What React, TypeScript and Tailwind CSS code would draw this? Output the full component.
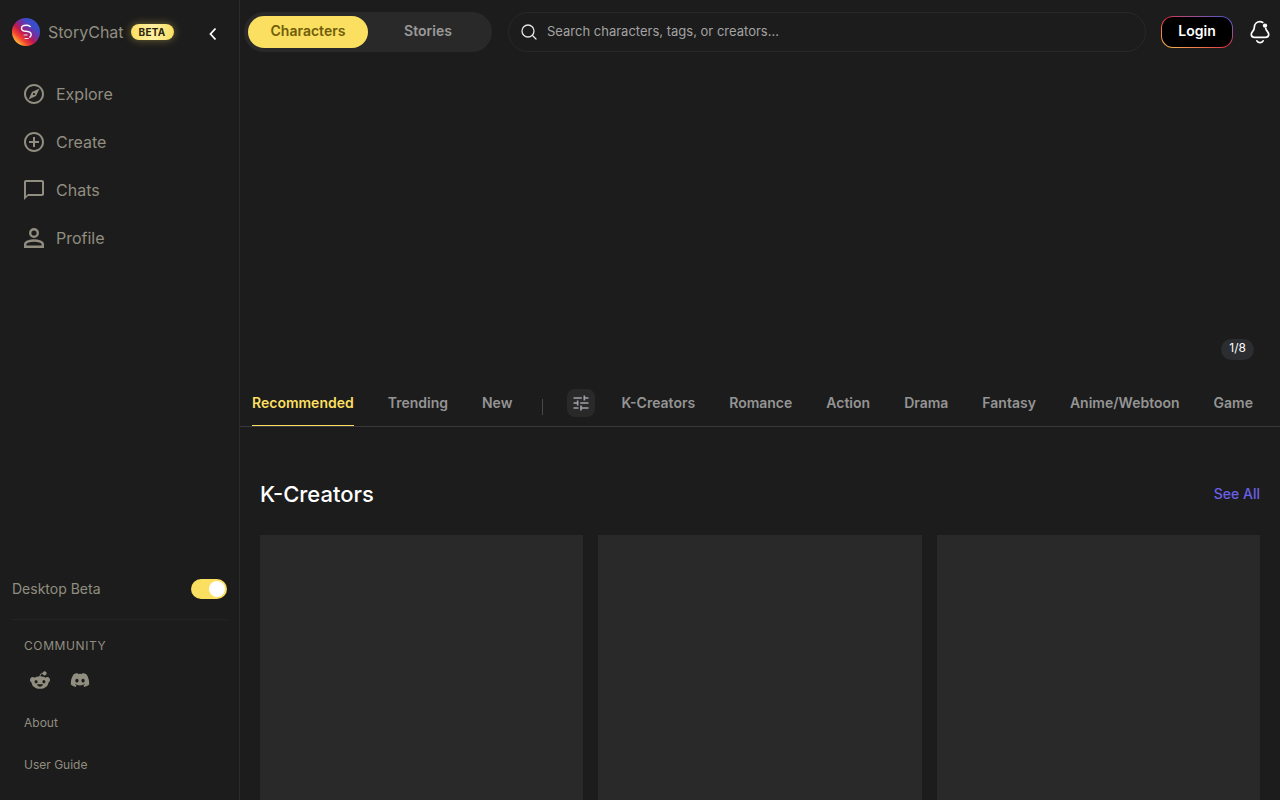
import { useState } from "react";
import { FaDiscord, FaRedditAlien } from "react-icons/fa6";
import {
  MdAddCircleOutline,
  MdChatBubbleOutline,
  MdOutlineExplore,
  MdTune,
} from "react-icons/md";

const categories = ["K-Creators", "Romance", "Action", "Drama", "Fantasy", "Anime/Webtoon", "Game"];
const feeds = ["Recommended", "Trending", "New"];

function Logo() {
  return (
    <svg viewBox="0 0 28 28" className="w-7 h-7 shrink-0" aria-hidden="true">
      <defs>
        <linearGradient id="logo" x1="0.12" y1="0.85" x2="0.8" y2="0.12">
          <stop offset="0" stopColor="#ffc13b" />
          <stop offset="0.22" stopColor="#f5452f" />
          <stop offset="0.42" stopColor="#c01a4e" />
          <stop offset="0.62" stopColor="#7b2c9c" />
          <stop offset="0.85" stopColor="#3b4cc8" />
        </linearGradient>
      </defs>
      <circle cx="14" cy="14" r="14" fill="url(#logo)" />
      <g fill="none" stroke="#fff" strokeLinecap="round">
        <path d="M18.200 8.600c-1-.9-2.300-1.300-4-1.300-2.700 0-4.700 1.200-4.700 3.100 0 2 1.800 2.600 4.500 2.900 3 .3 5.200 1 5.200 3.200 0 1.100-.5 2-1.400 2.600" strokeWidth="1.4" />
        <path d="M12 17h3.200M13 20.500h3.200" strokeWidth="0.9" />
      </g>
    </svg>
  );
}

function PersonIcon() {
  return (
    <svg viewBox="0 0 20 20" className="w-5 h-5 m-0.5" fill="none" stroke="currentColor" strokeWidth="2.4">
      <circle cx="10" cy="5" r="3.8" />
      <path d="M1.2 18.8v-2.5c0-2.5 5.3-3.8 8.8-3.8s8.8 1.3 8.8 3.8v2.5z" />
    </svg>
  );
}

function BellIcon() {
  return (
    <svg viewBox="0 0 24 24" className="w-6 h-6" fill="none" stroke="#fff" strokeWidth="1.700" strokeLinecap="round" strokeLinejoin="round">
      <path d="M14.800 2.400C14 2 13 1.700 12 1.700c-3.300 0-5.600 2.300-5.600 5.400 0 2.100-.7 3.100-1.900 4.500C3.500 12.800 3.100 13.700 3.300 14.900c.3 1.700 1.500 2.500 3.200 2.500h11c1.700 0 2.900-.8 3.200-2.500.2-1.200-.2-2.100-1.200-3.300-1-1.200-1.600-2-1.800-3.300" />
      <path d="M8.900 20.800c.6 1.100 1.700 1.900 3.100 1.900s2.500-.8 3.100-1.900" />
      <circle cx="17" cy="5.600" r="2.200" fill="#fff" stroke="none" />
    </svg>
  );
}

const navItems = [
  { label: "Explore", icon: <MdOutlineExplore className="w-6 h-6" /> },
  { label: "Create", icon: <MdAddCircleOutline className="w-6 h-6" /> },
  { label: "Chats", icon: <MdChatBubbleOutline className="w-6 h-6" /> },
  { label: "Profile", icon: <PersonIcon /> },
];

function Sidebar() {
  const [desktop, setDesktop] = useState(true);

  return (
    <aside className="w-60 shrink-0 flex flex-col border-r border-[#2b2b2b] text-[#918e80]">
      <div className="h-16 pl-3 pr-4 flex items-center">
        <Logo />
        <span className="ml-2 text-base">StoryChat</span>
        <span className="ml-[7px] h-4 px-2 flex items-center rounded-full bg-linear-to-r from-[#fadf60] via-[#fff0a0] to-[#fadf60] text-[10px] font-bold tracking-wide text-[#2b2610] shadow-[0_0_8px_rgba(250,223,96,0.4)]">
          BETA
        </span>
        <button type="button" aria-label="Collapse sidebar" className="ml-auto mt-1 w-5 h-5 flex items-center justify-center text-white">
          <svg viewBox="0 0 12 16" className="w-3 h-4" fill="none" stroke="currentColor" strokeWidth="1.8">
            <path d="M8.500 2.500 3.500 8l5 5.500" />
          </svg>
        </button>
      </div>

      <nav className="mt-1.5 px-3">
        {navItems.map((item) => (
          <a key={item.label} href="#" className="h-12 px-2.5 flex items-center gap-2.5 text-base">
            {item.icon}
            {item.label}
          </a>
        ))}
      </nav>

      <div className="mt-auto px-3 pb-3.5">
        <div className="h-10 mb-2.5 flex items-center justify-between text-sm">
          <label htmlFor="desktop-beta">Desktop Beta</label>
          <input
            id="desktop-beta"
            type="checkbox"
            role="switch"
            checked={desktop}
            onChange={(e) => setDesktop(e.target.checked)}
            className="appearance-none w-9 h-5 rounded-full bg-[#555] checked:bg-[#fadf60] before:block before:w-4 before:h-4 before:m-0.5 before:rounded-full before:bg-white checked:before:translate-x-4"
          />
        </div>
        <div className="border-t border-[#242424] px-3 pt-4">
          <h2 className="text-xs leading-5 tracking-wider">COMMUNITY</h2>
          <div className="mt-2 mb-1.5 flex gap-2">
            <a href="#" aria-label="Reddit" className="w-8 h-8 flex items-center justify-center">
              <FaRedditAlien className="w-5 h-5" />
            </a>
            <a href="#" aria-label="Discord" className="w-8 h-8 flex items-center justify-center">
              <FaDiscord className="w-5 h-5" />
            </a>
          </div>
          <a href="#" className="h-[42px] flex items-center text-xs">About</a>
          <a href="#" className="h-[42px] flex items-center text-xs">User Guide</a>
        </div>
      </div>
    </aside>
  );
}

function Header() {
  return (
    <header className="h-16 shrink-0 pl-1 pr-2 flex items-center">
      <div className="h-10 p-1 flex rounded-full bg-[#292929]">
        <button type="button" className="w-[120px] pb-0.5 rounded-full bg-[#fadf60] text-sm font-semibold text-[#6f5d0a]">
          Characters
        </button>
        <button type="button" className="w-[120px] pb-0.5 rounded-full text-sm font-semibold text-[#9a9a9a]">
          Stories
        </button>
      </div>
      <label className="ml-4 h-10 px-3 flex-1 flex items-center gap-2.5 rounded-full border border-[#292929]">
        <svg viewBox="0 0 16 16" className="w-4 h-4 shrink-0" fill="none" stroke="#e5e5e5" strokeWidth="1.3" strokeLinecap="round">
          <circle cx="7" cy="7" r="6" />
          <path d="m11.500 11.500 3.500 3.500" />
        </svg>
        <input
          type="text"
          aria-label="Search"
          placeholder="Search characters, tags, or creators..."
          className="flex-1 min-w-0 bg-transparent text-[13px] text-white placeholder:text-[#a3a3a3] outline-none"
        />
      </label>
      <button
        type="button"
        className="ml-[15px] w-[72px] h-8 p-px rounded-xl bg-linear-to-tr from-[#fdc04a] via-[#d92645] to-[#3b4cd8]"
      >
        <span className="h-full pb-0.5 flex items-center justify-center rounded-[11px] bg-black text-sm font-semibold text-white">
          Login
        </span>
      </button>
      <button type="button" aria-label="Notifications" className="ml-[15px]">
        <BellIcon />
      </button>
    </header>
  );
}

function Tabs() {
  const [active, setActive] = useState("Recommended");

  const tab = (name: string) => (
    <button
      key={name}
      type="button"
      onClick={() => setActive(name)}
      className={`h-full shrink-0 text-sm font-semibold ${
        active === name ? "text-[#fadf60] shadow-[inset_0_-1px_0_#fadf60]" : "text-[#949494]"
      }`}
    >
      {name}
    </button>
  );

  return (
    <div className="h-[47px] shrink-0 px-3 flex items-center gap-[34px] border-b border-[#383838] overflow-hidden">
      {feeds.map(tab)}
      <div className="flex items-center gap-6 -ml-1 -mr-2">
        <span className="w-px h-4 mt-2 bg-[#484848]" />
        <button type="button" aria-label="Filters" className="w-7 h-7 flex items-center justify-center rounded-lg bg-[#292929] text-[#a0a0a8]">
          <MdTune className="w-5 h-5" />
        </button>
      </div>
      {categories.map(tab)}
    </div>
  );
}

export default function App() {
  return (
    <div className="min-h-screen flex bg-[#1c1c1c] font-['Inter',sans-serif]">
      <Sidebar />
      <main className="flex-1 min-w-0 flex flex-col">
        <Header />

        {/* Banner */}
        <section className="h-[316px] shrink-0 pr-[26px] pb-5 flex items-end justify-end">
          <span className="h-[21px] px-2 pb-1 flex items-center rounded-full bg-[#2c2d30] text-xs text-white">1/8</span>
        </section>

        <Tabs />

        <section className="flex-1 flex flex-col px-5 pt-[47px]">
          <div className="h-10 flex items-center justify-between">
            <h2 className="text-[22px] font-medium text-white">K-Creators</h2>
            <a href="#" className="text-sm font-medium text-[#6a60e8]">See All</a>
          </div>
          <div className="mt-[21px] flex-1 grid grid-cols-3 gap-[15px]">
            <div className="bg-[#292929]" />
            <div className="bg-[#292929]" />
            <div className="bg-[#292929]" />
          </div>
        </section>
      </main>
    </div>
  );
}
